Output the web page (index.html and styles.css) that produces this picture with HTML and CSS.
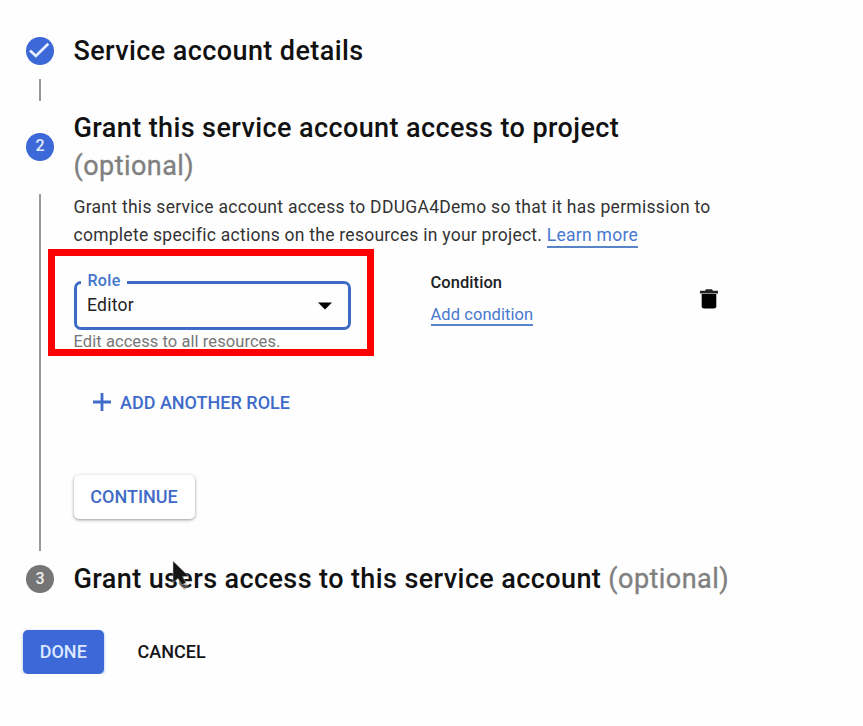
FILE: index.html
```html
<!DOCTYPE html>
<html lang="en">
<head>
<meta charset="utf-8">
<title>Create service account</title>
<link rel="stylesheet" href="styles.css">
</head>
<body>
<main class="stepper">
  <section class="step-head">
    <span class="badge"><svg viewBox="0 0 28 28" width="28" height="28"><path d="M4 13.6 9.9 19 22.3 6.8" fill="none" stroke="#e8f0ff" stroke-width="2.7"/></svg></span>
    <h2>Service account details</h2>
  </section>
  <div class="connector short"></div>
  <section class="step-head two-line">
    <span class="badge">2</span>
    <h2>Grant this service account access to project<br><span class="optional">(optional)</span></h2>
  </section>
  <section class="step-body">
    <div class="connector"></div>
    <div class="content">
      <p class="description">Grant this service account access to DDUGA4Demo so that it has permission to<br><span class="tight">complete specific actions on the resources in your project. <a class="learn">Learn more</a></span></p>
      <div class="role-row">
        <div class="role">
          <div class="select">
            <span class="label">Role</span>
            <span class="value">Editor</span>
            <svg class="arrow" width="14" height="8" viewBox="0 0 14 8"><path d="M0 .5h14L7 7.5z"/></svg>
          </div>
          <div class="hint">Edit access to all resources.</div>
          <div class="highlight"></div>
        </div>
        <div class="condition">
          <strong>Condition</strong>
          <a class="add-condition">Add condition</a>
        </div>
        <svg class="trash" width="18" height="20" viewBox="0 0 18 20"><path d="M0 1.8h5L6 .3h6l1 1.5h5v2.7H0z" fill="#222"/><path d="M1.7 5.1h14.6v12.1q0 2.4-2.4 2.4H4.1q-2.4 0-2.4-2.4z"/></svg>
      </div>
      <div class="add-role">
        <svg width="18" height="18" viewBox="0 0 18 18"><path d="M9 0v18M0 9h18" stroke="#3f6bcb" stroke-width="2.8"/></svg>
        <span>ADD ANOTHER ROLE</span>
      </div>
      <button class="continue">CONTINUE</button>
    </div>
  </section>
  <section class="step-head last">
    <span class="badge grey">3</span>
    <h2>Grant users access to this service account <span class="optional">(optional)</span></h2>
    <svg class="cursor" width="26" height="38" viewBox="0 0 26 38"><path d="M7 23l6-3 5 7-5 3z" fill="#888" opacity=".5"/><path d="M2 1v22l5-4.5 4 6.5 4-2.5-3.5-6H18z" fill="#151515" stroke="#ccc" stroke-width=".5"/></svg>
  </section>
  <div class="actions">
    <button class="done">DONE</button>
    <button class="cancel">CANCEL</button>
  </div>
</main>
</body>
</html>
```
FILE: styles.css
```css
* { box-sizing: border-box; }
body { margin: 0; background: #fefefe; color: #202124; font-family: Roboto, "Liberation Sans", sans-serif; }
.stepper { width: 863px; padding: 31px 0 0 23px; }
.step-head { display: flex; align-items: center; height: 39px; padding-left: 3px; gap: 19.5px; position: relative; }
.step-head.two-line { height: 77px; margin-top: 7px; }
h2 { margin: 0; font-size: 27px; line-height: 38px; font-weight: 500; letter-spacing: .4px; color: #111; white-space: nowrap; }
.optional { font-weight: 400; color: #808080; -webkit-text-stroke: .35px #808080; letter-spacing: .45px; }
.badge { width: 28px; height: 28px; border-radius: 50%; background: #3c68d8; color: #e2ebff; font-size: 16px; line-height: 26px; padding-bottom: 1px; font-weight: 500; display: flex; align-items: center; justify-content: center; flex: none; }
.badge svg { margin-bottom: -1px; }
.badge.grey { background: #757575; color: #eee; }
.connector { width: 2px; background: #999; margin-left: 16px; flex: none; }
.connector.short { height: 22px; margin-top: 9px; }
.step-body { display: flex; height: 357px; margin-top: 9px; }
.content { margin-left: 32.5px; }
.description { margin: -1px 0 0; height: 57px; font-size: 17.5px; line-height: 28px; letter-spacing: .28px; color: #333; white-space: nowrap; }
.tight { letter-spacing: .26px; }
.learn, .add-condition { color: #4878cf; border-bottom: 2px solid #5a84c8; }
.learn { padding-bottom: 1px; }
.role-row { display: flex; align-items: flex-start; margin-top: 31px; height: 76px; }
.role { width: 277px; position: relative; }
.select { height: 49px; border: 3px solid #3e6cc4; border-radius: 7px; display: flex; align-items: center; justify-content: space-between; padding: 0 16px 0 10.5px; position: relative; }
.label { position: absolute; left: 4px; top: -15px; padding: 0 6px 0 7px; background: #fefefe; color: #4475cc; font-size: 16px; letter-spacing: .3px; font-weight: 500; line-height: 24px; }
.value { font-size: 17.5px; line-height: 24px; letter-spacing: .25px; padding-bottom: 2px; color: #222; }
.hint { font-size: 16.5px; line-height: 24px; letter-spacing: .07px; color: #777; white-space: nowrap; }
.highlight { position: absolute; left: -25.5px; top: -32px; width: 326px; height: 107px; border: 7px solid #f00; }
.condition { margin-left: 80px; margin-top: -10px; width: 269px; display: flex; flex-direction: column; align-items: flex-start; }
.condition strong { font-size: 16.5px; line-height: 24px; font-weight: 500; letter-spacing: .06px; }
.add-condition { font-size: 16.5px; line-height: 19px; margin-top: 10px; letter-spacing: .07px; }
.trash { margin-top: 8px; }
.add-role { display: flex; align-items: center; gap: 9px; margin: 33px 0 0 19.5px; height: 24px; color: #3f6bcb; font-size: 18px; font-weight: 500; white-space: nowrap; }
button { border: 0; padding: 0 0 2px; font-family: inherit; font-size: 18px; font-weight: 500; border-radius: 5px; background: transparent; }
.continue { display: block; width: 121px; height: 44px; margin-top: 61px; color: #3f6bc6; background: #fff; box-shadow: 0 1px 3px rgba(0,0,0,.35), 0 1px 5px rgba(0,0,0,.08); }
.last { height: 40px; margin-top: 8px; }
.last h2 { padding-bottom: 1px; }
.cursor { position: absolute; left: 148px; top: 1px; }
.actions { display: flex; margin-top: 31px; gap: 34px; align-items: center; }
.done { width: 80.5px; height: 44px; background: #3c68d8; color: #dce8ff; box-shadow: 0 1px 3px rgba(60,104,216,.5); }
.cancel { color: #151515; height: 44px; }
```
